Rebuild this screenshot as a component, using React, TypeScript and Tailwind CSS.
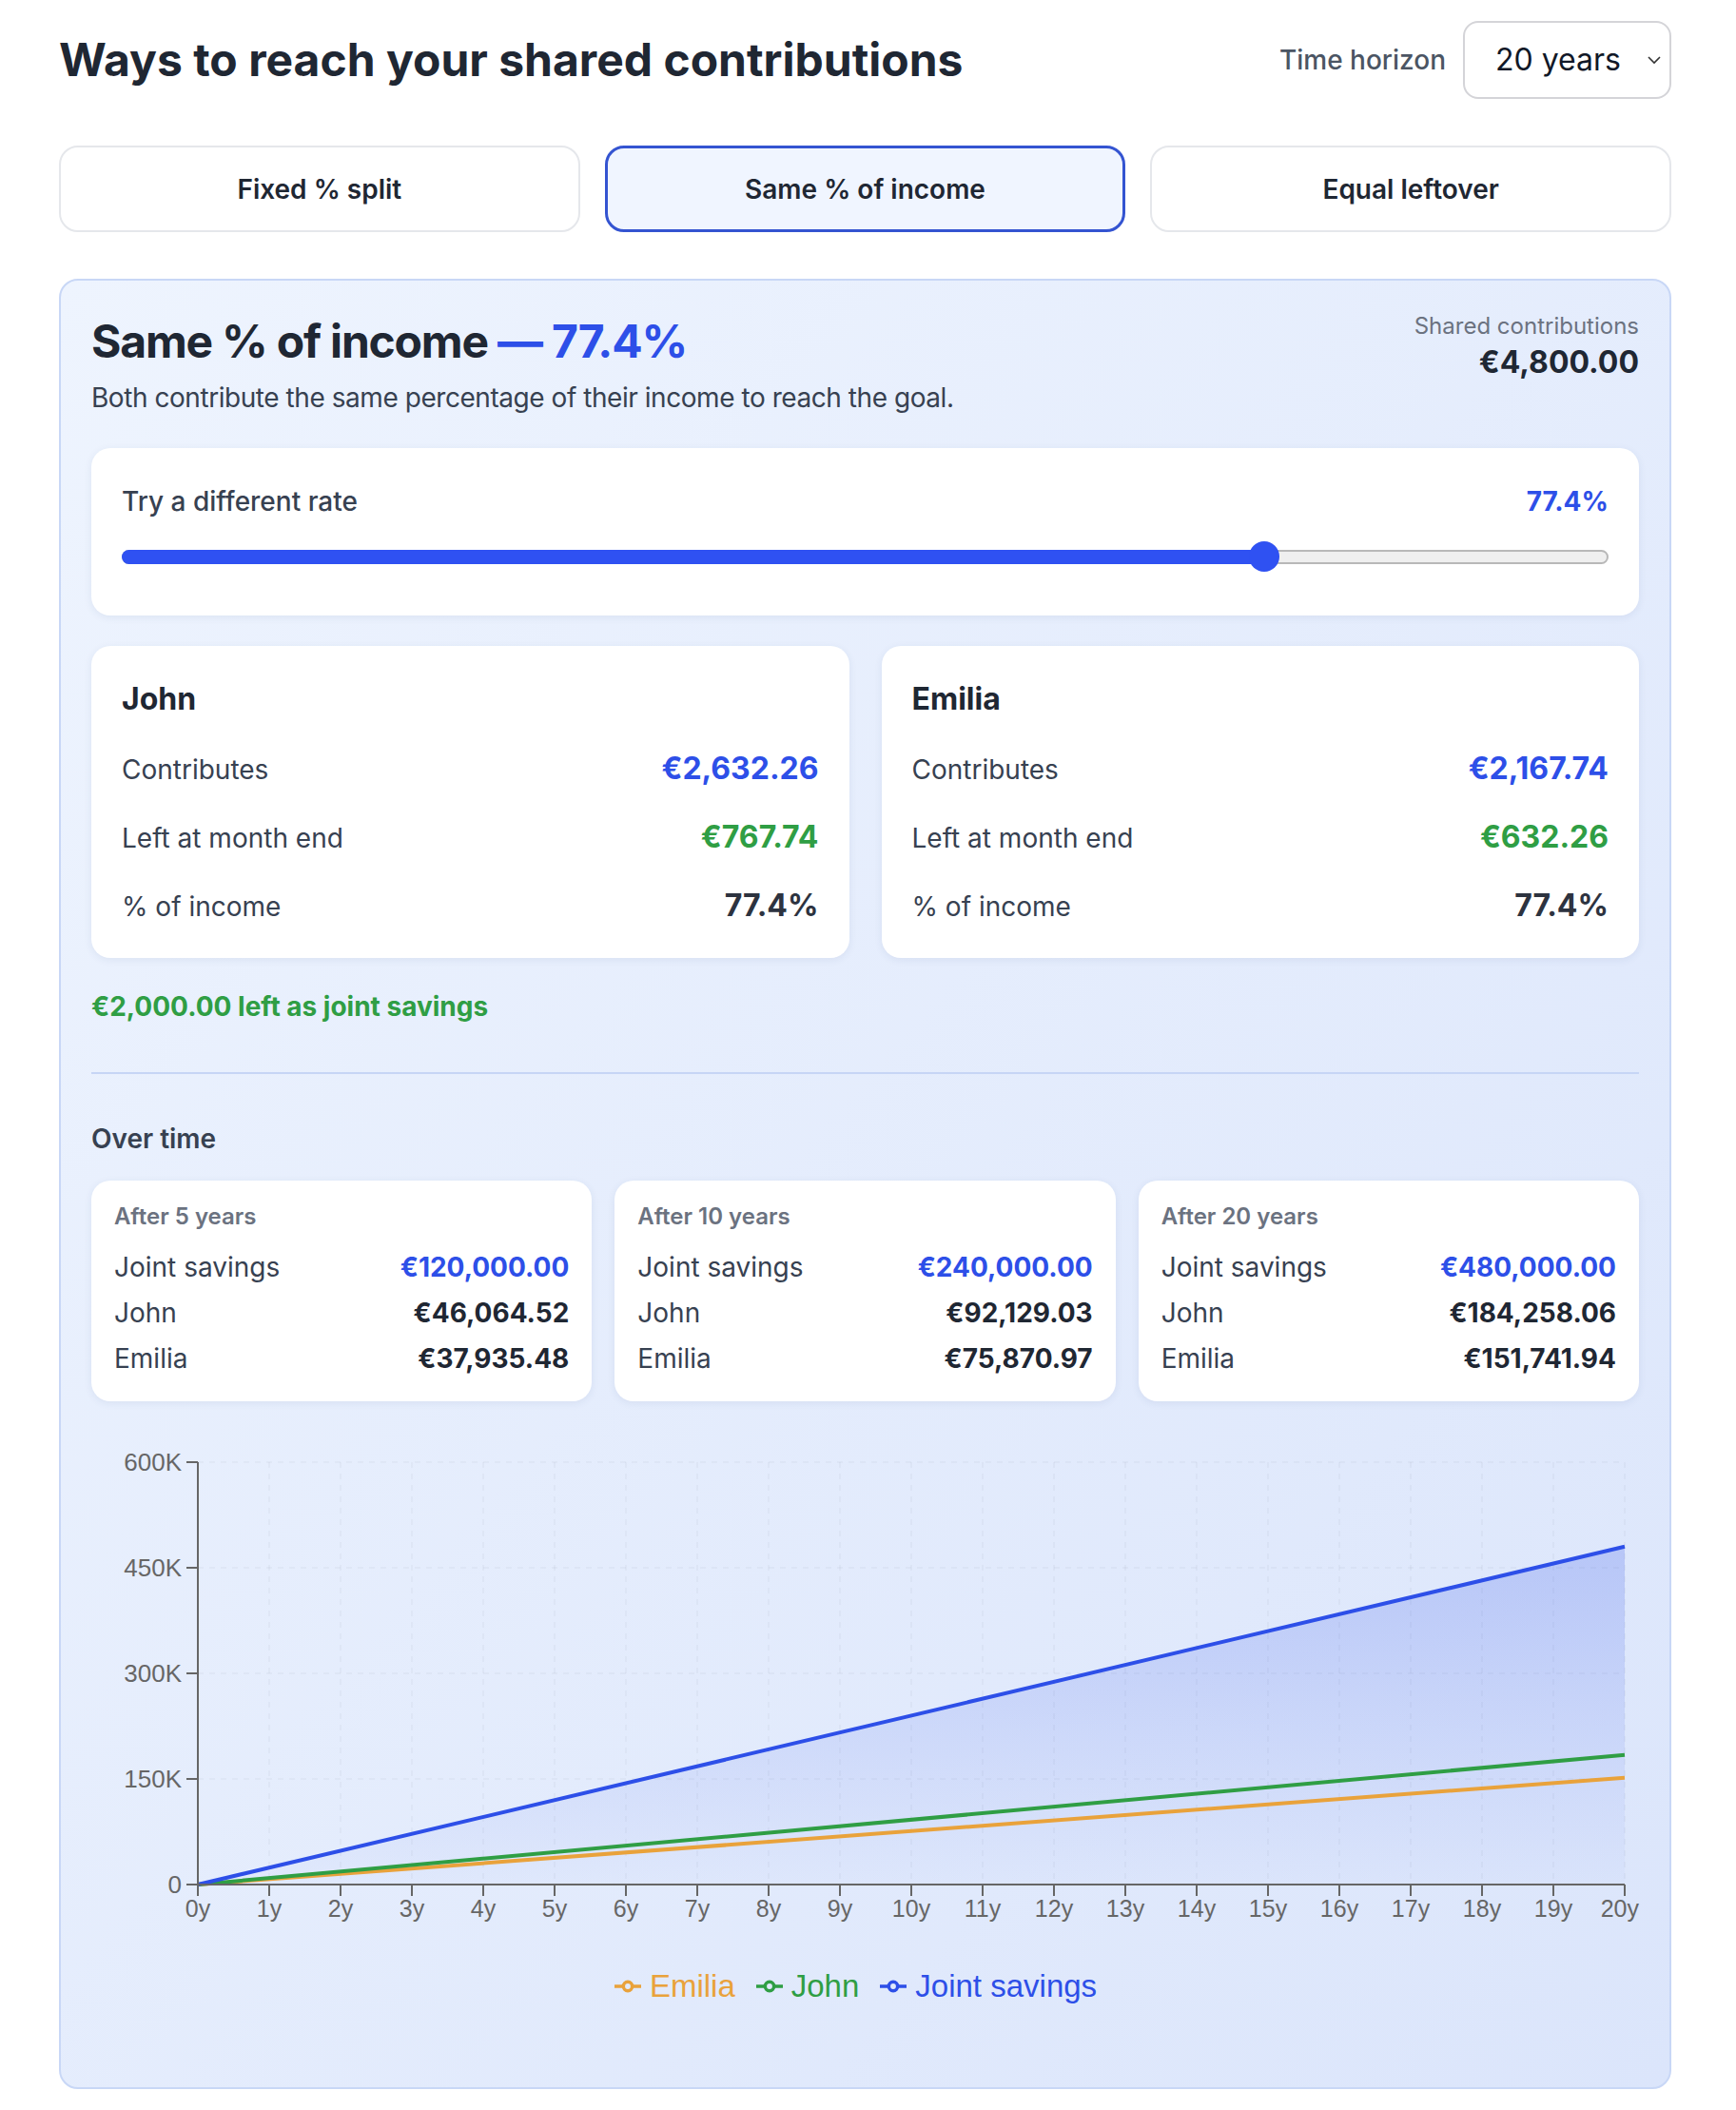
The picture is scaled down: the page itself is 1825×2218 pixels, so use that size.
import React from "react";

const BLUE = "#2d4fe8";
const GREEN = "#2f9e44";
const ORANGE = "#e9a23b";

const people = [
  { name: "John", contributes: "€2,632.26", left: "€767.74", pct: "77.4%" },
  { name: "Emilia", contributes: "€2,167.74", left: "€632.26", pct: "77.4%" },
];

const milestones = [
  { label: "After 5 years", joint: "€120,000.00", john: "€46,064.52", emilia: "€37,935.48" },
  { label: "After 10 years", joint: "€240,000.00", john: "€92,129.03", emilia: "€75,870.97" },
  { label: "After 20 years", joint: "€480,000.00", john: "€184,258.06", emilia: "€151,741.94" },
];

const tabs = ["Fixed % split", "Same % of income", "Equal leftover"];

// yearly growth of each pot
const perYear = { joint: 24000, john: 767.74 * 12, emilia: 632.26 * 12 };

const ChartSvg = () => {
  const W = 1630;
  const H = 530;
  const x0 = 112;
  const x1 = 1612;
  const yTop = 32;
  const yBot = 476;
  const x = (year: number) => x0 + ((x1 - x0) * year) / 20;
  const y = (v: number) => yBot - (v / 600000) * (yBot - yTop);
  const years = Array.from({ length: 21 }, (_, i) => i);
  const yTicks = [0, 150000, 300000, 450000, 600000];
  const yLabel = (v: number) => (v === 0 ? "0" : `${v / 1000}K`);
  const line = (rate: number) => `M${x(0)},${y(0)} L${x(20)},${y(rate * 20)}`;

  return (
    <svg width={W} height={H} className="block overflow-visible font-['Liberation_Sans',Arial,sans-serif]">
      <defs>
        <linearGradient id="jointFill" x1="0" y1="0" x2="0" y2="1">
          <stop offset="0%" stopColor={BLUE} stopOpacity={0.22} />
          <stop offset="100%" stopColor={BLUE} stopOpacity={0.02} />
        </linearGradient>
      </defs>

      {/* grid */}
      <g stroke="#000" strokeOpacity={0.04} strokeWidth={1.5} strokeDasharray="6 6">
        {yTicks.map((t) => (
          <line key={`h${t}`} x1={x0} x2={x1} y1={y(t)} y2={y(t)} />
        ))}
        {years.map((yr) => (
          <line key={`v${yr}`} x1={x(yr)} x2={x(yr)} y1={yTop} y2={yBot} />
        ))}
      </g>

      {/* joint savings area */}
      <path
        d={`M${x(0)},${y(0)} L${x(20)},${y(perYear.joint * 20)} L${x(20)},${yBot} Z`}
        fill="url(#jointFill)"
      />

      <path d={line(perYear.emilia)} stroke={ORANGE} strokeWidth={4} fill="none" />
      <path d={line(perYear.john)} stroke={GREEN} strokeWidth={4} fill="none" />
      <path d={line(perYear.joint)} stroke={BLUE} strokeWidth={4} fill="none" />

      {/* axes */}
      <g stroke="#666" strokeWidth={2}>
        <line x1={x0} x2={x0} y1={yTop} y2={yBot} />
        <line x1={x0} x2={x1} y1={yBot} y2={yBot} />
        {yTicks.map((t) => (
          <line key={`yt${t}`} x1={x0 - 12} x2={x0} y1={y(t)} y2={y(t)} />
        ))}
        {years.map((yr) => (
          <line key={`xt${yr}`} x1={x(yr)} x2={x(yr)} y1={yBot} y2={yBot + 12} />
        ))}
      </g>
      <g fill="#666">
        {yTicks.map((t) => (
          <text key={`yl${t}`} x={x0 - 17} y={y(t) + 9} textAnchor="end" fontSize={26}>
            {yLabel(t)}
          </text>
        ))}
        {years.map((yr) =>
          yr === 20 ? (
            <text key={`xl${yr}`} x={W - 3} y={510} textAnchor="end" fontSize={25}>
              {`${yr}y`}
            </text>
          ) : (
            <text key={`xl${yr}`} x={x(yr)} y={510} textAnchor="middle" fontSize={25}>
              {`${yr}y`}
            </text>
          )
        )}
      </g>
    </svg>
  );
};

const LegendIcon = ({ color }: { color: string }) => (
  <svg width={28} height={28} viewBox="0 0 32 32" className="shrink-0">
    <path
      d="M0,16h10.667A5.333,5.333,0,1,1,21.333,16H32M21.333,16A5.333,5.333,0,1,1,10.667,16"
      stroke={color}
      strokeWidth={4}
      fill="none"
    />
  </svg>
);

const legend = [
  { label: "Emilia", color: ORANGE },
  { label: "John", color: GREEN },
  { label: "Joint savings", color: BLUE },
];

export default function App() {
  return (
    <div className="min-h-screen bg-white font-['Inter',sans-serif] text-[#1f2937] pl-[62px] pr-[68px] pt-[22px] pb-6">
      {/* header */}
      <div className="flex items-center justify-between">
        <h1 className="text-[48px] leading-[64px] font-bold text-[#1f2733]">
          Ways to reach your shared contributions
        </h1>
        <div className="flex items-center gap-[18px]">
          <span className="text-[28px] font-medium text-[#4b5563]">Time horizon</span>
          <div className="flex h-[82px] w-[219px] items-center justify-between rounded-[16px] border-2 border-[#d4d4d8] bg-white pl-[32px] pr-[9px]">
            <span className="text-[32px] text-[#111827]">20 years</span>
            <svg width="14" height="9" viewBox="0 0 14 9">
              <polyline points="1,1 7,7 13,1" fill="none" stroke="#333" strokeWidth="1.6" />
            </svg>
          </div>
        </div>
      </div>

      {/* strategy tabs */}
      <div className="mt-[49px] grid grid-cols-3 gap-[26px]">
        {tabs.map((t) => {
          const active = t === "Same % of income";
          return (
            <button
              key={t}
              className={
                active
                  ? "h-[91px] rounded-[20px] border-[3px] border-[#3454d1] bg-[#f0f5ff] text-[28px] font-semibold text-[#1f2733]"
                  : "h-[91px] rounded-[20px] border-2 border-[#e5e7eb] bg-white text-[28px] font-semibold text-[#1f2733]"
              }
            >
              {t}
            </button>
          );
        })}
      </div>

      {/* selected strategy */}
      <section className="mt-[49px] rounded-[20px] border-2 border-[#c8d7f6] bg-gradient-to-br from-[#eef4fe] to-[#dbe5fb] p-[32px]">
        <div className="flex items-start justify-between">
          <div>
            <h2 className="text-[48px] leading-[64px] font-bold tracking-tight text-[#1f2733]">
              Same % of income <span style={{ color: BLUE }}>— 77.4%</span>
            </h2>
            <p className="mt-[7px] text-[28px] leading-[40px] tracking-[-0.016em] text-[#374151]">
              Both contribute the same percentage of their income to reach the goal.
            </p>
          </div>
          <div className="text-right">
            <div className="text-[24px] leading-[32px] text-[#6b7280]">Shared contributions</div>
            <div className="text-[32px] leading-[44px] font-bold text-[#1f2733]">€4,800.00</div>
          </div>
        </div>

        {/* rate slider */}
        <div className="mt-[33px] rounded-[20px] bg-white px-[32px] pt-[36px] pb-[46px] shadow-[0_2px_8px_rgba(40,60,120,0.08)]">
          <div className="flex items-center justify-between text-[28px] leading-[40px]">
            <span className="font-medium text-[#374151]">Try a different rate</span>
            <span className="font-bold" style={{ color: BLUE }}>77.4%</span>
          </div>
          <div className="mt-[22px] flex h-[32px] items-center">
            <div className="relative h-[15px] w-full rounded-full border-2 border-[#b8b8b8] bg-[#efefef]">
              <div className="absolute -left-[2px] -top-[2px] h-[15px] w-[76.9%] rounded-full bg-[#2f51f2]" />
              <div className="absolute left-[76.9%] top-1/2 h-[32px] w-[32px] -translate-x-1/2 -translate-y-1/2 rounded-full bg-[#2f51f2]" />
            </div>
          </div>
        </div>

        {/* per-person breakdown */}
        <div className="mt-[32px] grid grid-cols-2 gap-[34px]">
          {people.map((p) => (
            <div
              key={p.name}
              className="flex flex-col gap-[24px] rounded-[20px] bg-white px-[32px] pt-[33px] pb-[34px] shadow-[0_2px_8px_rgba(40,60,120,0.08)]"
            >
              <div className="text-[32px] leading-[45px] font-bold text-[#1f2733]">{p.name}</div>
              <div className="flex h-[48px] items-baseline justify-between pt-[3px]">
                <span className="text-[28px] text-[#374151]">Contributes</span>
                <span className="text-[32px] font-bold" style={{ color: BLUE }}>{p.contributes}</span>
              </div>
              <div className="flex h-[48px] items-baseline justify-between pt-[3px]">
                <span className="text-[28px] text-[#374151]">Left at month end</span>
                <span className="text-[32px] font-bold" style={{ color: GREEN }}>{p.left}</span>
              </div>
              <div className="flex h-[48px] items-baseline justify-between pt-[3px]">
                <span className="text-[28px] text-[#374151]">% of income</span>
                <span className="text-[32px] font-bold text-[#2d3340]">{p.pct}</span>
              </div>
            </div>
          ))}
        </div>

        <p className="mt-[31px] text-[28px] leading-[40px] font-bold" style={{ color: GREEN }}>
          €2,000.00 left as joint savings
        </p>

        <div className="mt-[49px] h-[2px] bg-[#c6d5f5]" />

        <h3 className="mt-[48px] text-[28px] leading-[40px] font-semibold text-[#374151]">Over time</h3>

        <div className="mt-[24px] grid grid-cols-3 gap-[24px]">
          {milestones.map((m) => (
            <div
              key={m.label}
              className="rounded-[20px] bg-white px-[24px] pt-[22px] pb-[25px] shadow-[0_2px_8px_rgba(40,60,120,0.08)]"
            >
              <div className="text-[24px] leading-[32px] font-semibold text-[#6b7280]">{m.label}</div>
              <div className="mt-[17px] flex flex-col gap-[8px] text-[28px] leading-[40px]">
                <div className="flex justify-between">
                  <span className="text-[#374151]">Joint savings</span>
                  <span className="font-bold" style={{ color: BLUE }}>{m.joint}</span>
                </div>
                <div className="flex justify-between">
                  <span className="text-[#374151]">John</span>
                  <span className="font-bold text-[#1f2733]">{m.john}</span>
                </div>
                <div className="flex justify-between">
                  <span className="text-[#374151]">Emilia</span>
                  <span className="font-bold text-[#1f2733]">{m.emilia}</span>
                </div>
              </div>
            </div>
          ))}
        </div>

        {/* growth chart */}
        <div className="mt-[32px] h-[657px]">
          <ChartSvg />
          <div className="mt-[35px] flex items-center justify-center gap-[22px] pr-[20px] font-['Liberation_Sans',Arial,sans-serif] text-[33px] leading-[36px]">
            {legend.map((l) => (
              <div key={l.label} className="flex items-center gap-[9px]" style={{ color: l.color }}>
                <LegendIcon color={l.color} />
                <span>{l.label}</span>
              </div>
            ))}
          </div>
        </div>
      </section>
    </div>
  );
}
